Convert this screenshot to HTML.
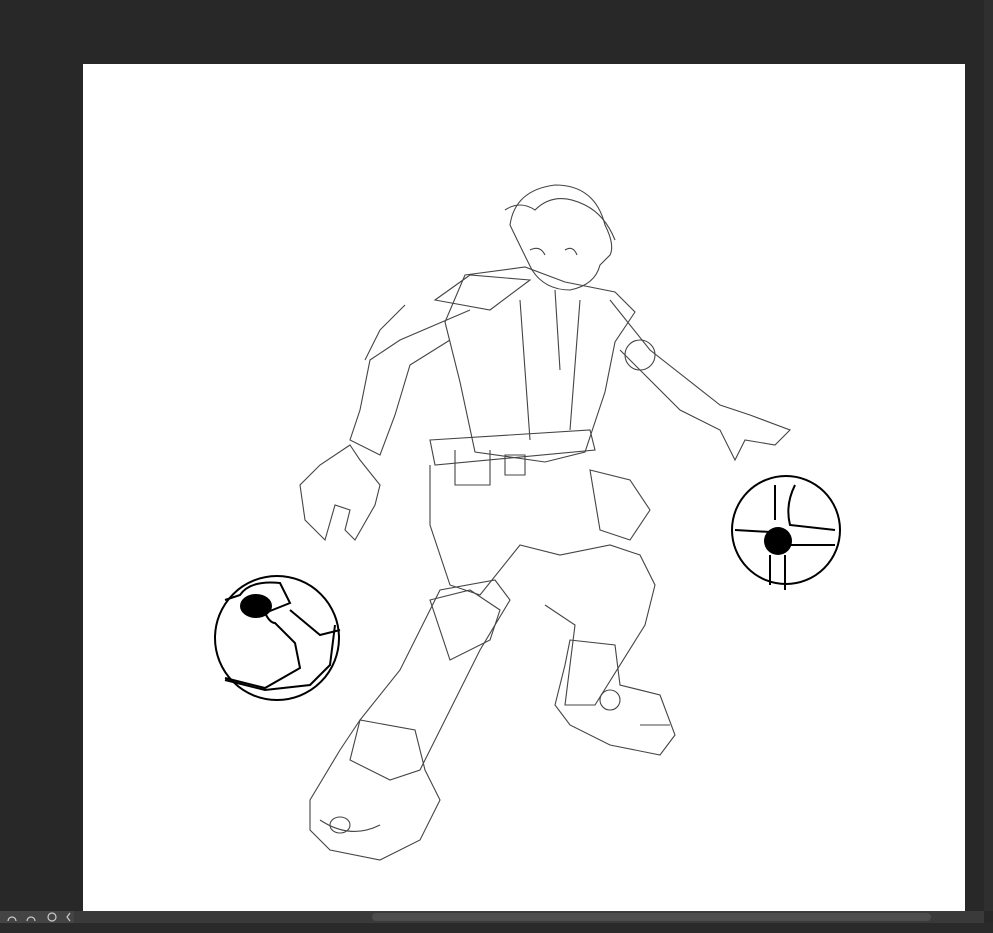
<!DOCTYPE html>
<html><head><meta charset="utf-8"><style>
html,body{margin:0;padding:0;width:993px;height:933px;overflow:hidden;background:#282828;font-family:"Liberation Sans",sans-serif}
#canvas{position:absolute;left:83px;top:64px;width:882px;height:847px;background:#fff}
#vbar{position:absolute;left:984px;top:0;width:9px;height:911px;background:#2f2f2f}
#bar{position:absolute;left:0;top:911px;width:984px;height:12px;background:#3a3a3a}
#thumb{position:absolute;left:372px;top:913px;width:559px;height:8px;border-radius:4px;background:#4d4d4d}
#tools{position:absolute;left:0;top:911px;width:74px;height:12px;background:#444}
#bottom{position:absolute;left:0;top:923px;width:993px;height:10px;background:#2a2a2a}
svg{position:absolute;left:0;top:0}
</style></head><body>
<div id="canvas"></div>
<div id="vbar"></div>
<div id="bar"></div>
<div id="tools"></div>
<div id="thumb"></div>
<div id="bottom"></div>
<svg width="993" height="933" viewBox="0 0 993 933">
<g fill="none" stroke="#ccc" stroke-width="1.2">
<path d="M8 921 a4 4 0 0 1 8 0 M27 921 a4 4 0 0 1 8 0"/>
<circle cx="52" cy="917" r="4"/><path d="M70 913 l-3 4 l3 4"/>
</g>
<g fill="none" stroke="#444" stroke-width="1.1">
<!-- head -->
<path d="M510 225 q5-35 45-40 q40 0 50 40 q10 20 5 30 l-10 10 q-5 20-30 25 q-25 0-38-20 q-10-20-22-45z"/>
<path d="M505 210 q15-10 30 0 q20-20 50-5 q20 10 30 35"/>
<path d="M530 250 q10-5 15 5 M565 250 q8-5 12 5"/>
<!-- torso -->
<path d="M465 275 l60-8 l40 15 l50 10 l20 20 l-20 30 l-10 50 l-20 60 l-40 10 l-70-10 l-15-70 l-15-60z"/>
<path d="M435 300 l35-25 l60 5 l-40 30 z"/>
<path d="M520 300 l10 140 M555 290 l5 80 M580 300 l-10 130"/>
<path d="M430 440 l160-10 l5 20 l-160 15z"/>
<path d="M455 450 l0 35 l35 0 l0-35 M505 455 l20 0 l0 20 l-20 0z"/>
<!-- left arm -->
<path d="M470 310 l-70 30 l-30 20 l-10 50 l-10 30 l30 15 l15-40 l15-50 l40-25"/>
<path d="M380 330 l25-25 M365 360 l15-30"/>
<path d="M350 445 l-30 20 l-20 20 l5 35 l20 20 l10-35 l15 5 l-5 20 l10 10 l20-35 l5-20 l-20-25z"/>
<!-- right arm -->
<path d="M610 300 l40 50 l70 55 l30 10 l40 15 l-15 15 l-30-5 l-10 20 l-15-30 l-40-20 l-60-60"/>
<circle cx="640" cy="355" r="15"/>
<!-- hips and legs -->
<path d="M430 465 l0 60 l20 60 l30 10 l40-50 l40 10 l50-10 l30 10 l15 30 l-10 40 l-50 80 l-30 0 l10-80 l-30-20"/>
<path d="M590 470 l40 10 l20 30 l-20 30 l-30-10z"/>
<path d="M440 590 l-40 80 l-40 50 l-10 40 l40 20 l30-10 l30-60 l30-60 l30-50 l-15-20z"/>
<path d="M430 600 l40-10 l30 20 l-10 30 l-40 20z"/>
<path d="M360 720 l-20 30 l-30 50 l0 30 l20 20 l50 10 l40-20 l20-40 l-15-30 l-10-40z"/>
<path d="M320 820 q30 20 60 5 M330 825 a10 8 0 1 0 20 0 a10 8 0 1 0 -20 0"/>
<path d="M570 640 l45 5 l5 40 l40 10 l15 40 l-15 20 l-50-10 l-40-20 l-15-20 l10-40z"/>
<path d="M600 700 a10 10 0 1 0 20 0 a10 10 0 1 0 -20 0 M640 725 l30 0"/>
</g>
<!-- balls -->
<g fill="none" stroke="#000" stroke-width="2">
<circle cx="277" cy="638" r="62"/>
<path d="M225 600 l15-5 q10-15 40-12 l10 20 l-25 10 q5 10 10 10 l20 20 l5 25 l-35 20 l-40-10"/>
<path d="M290 610 l30 25 l20-5 M335 625 l-5 40 l-20 20 l-45 5 l-40-10"/>
<path d="M732 530 a54 54 0 1 0 108 0 a54 54 0 1 0 -108 0"/>
<path d="M775 485 l0 35 M795 485 q-10 20-5 40 l45 5 M735 530 l35 2 M790 545 l45 0 M770 555 l0 30 M785 555 l0 35"/>
</g>
<ellipse cx="256" cy="606" rx="16" ry="12" fill="#000"/>
<circle cx="778" cy="541" r="14" fill="#000"/>
</svg>
</body></html>
